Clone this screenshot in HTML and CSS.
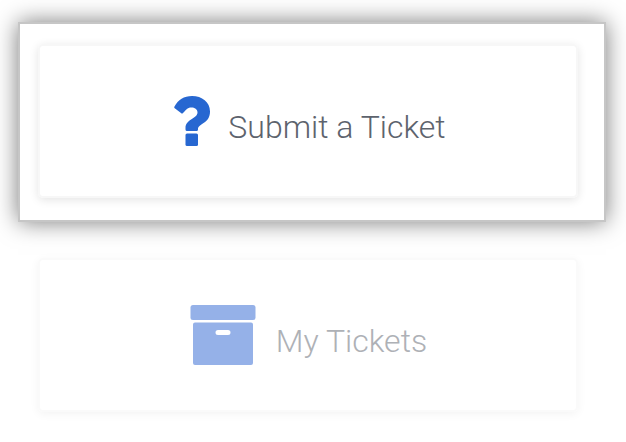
FILE: index.html
```html
<!DOCTYPE html>
<html lang="en">
<head>
<meta charset="utf-8">
<title>Tickets</title>
<link rel="stylesheet" href="styles.css">
</head>
<body>
<main class="page">
  <section class="spotlight">
    <a class="card submit">
      <svg class="question" viewBox="0 0 36 50"><path d="M0.5 10.5C4 4 10 0 18 0C28 0 36 6 36 15.5C36 28 24 27 24 33.5Q24 35 22.5 35H13Q11.5 35 11.5 33.5V32C11.5 23 23.500 22.500 23.500 16.500C23.500 13 20.500 11.500 17.500 11.500C13 11.500 12 14 9 17Q8 18 7 17L0.700 12.200Q-.2 11.500 .5 10.500Z"/><rect x="11.500" y="37.500" width="12.500" height="12.500" rx="1.500"/></svg>
      <span class="label">Submit a Ticket</span>
    </a>
  </section>
  <a class="card muted">
    <svg class="archive" viewBox="0 0 66 60"><rect x=".5" width="65" height="15" rx="2.500"/><path fill-rule="evenodd" d="M5 17.500H61Q63 17.500 63 19.500V58Q63 60 61 60H5Q3 60 3 58V19.500Q3 17.500 5 17.500ZM28 25A2.500 2.500 0 0 0 28 30H38A2.500 2.500 0 0 0 38 25Z"/></svg>
    <span class="label">My Tickets</span>
  </a>
</main>
</body>
</html>
```
FILE: styles.css
```css
body { margin: 0; background: #fff; }
.page { box-sizing: border-box; height: 442px; padding: 24px 22px 0 20px; overflow: hidden; }
.spotlight { box-sizing: border-box; height: 196px; padding: 20px 26px 0 18px; box-shadow: 0 0 0 2px #c6c6c6, 0 0 22px 2px rgba(0,0,0,.52); }
.card { box-sizing: border-box; display: flex; height: 154px; align-items: center; justify-content: center; border: 2px solid #f7f7f7; border-radius: 5px; box-shadow: 0 2px 10px rgba(0,0,0,.11); color: #5d636d; }
.submit { padding-left: 4px; }
.question { width: 36px; height: 50px; margin-right: 18px; fill: #2767d1; }
.label { font: 300 32px/40px Roboto, sans-serif; padding-top: 12px; }
.muted { margin: 38px 26px 0 18px; padding-left: 1px; padding-bottom: 1px; color: #aeb1b6; border-color: #fafafa; box-shadow: 0 2px 10px rgba(0,0,0,.05); }
.archive { width: 66px; height: 60px; margin-right: 20px; fill: #95b1e8; }
```
